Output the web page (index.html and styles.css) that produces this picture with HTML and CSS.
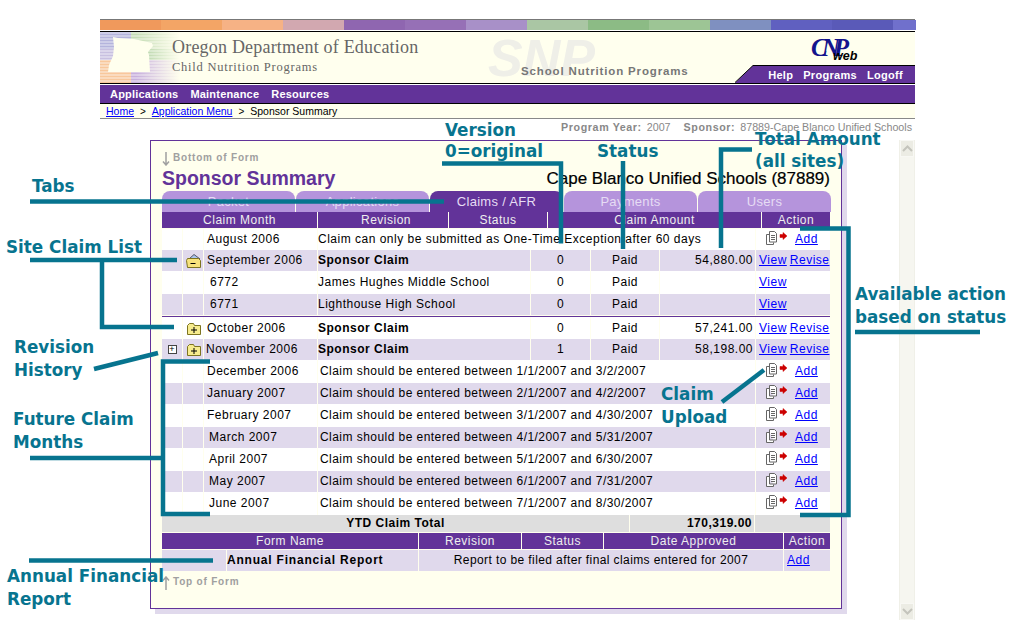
FILE: index.html
```html
<!DOCTYPE html>
<html lang="en">

<head>
    <meta charset="UTF-8">
    <title>Sponsor Summary</title>
    <link rel="stylesheet" href="styles.css">
</head>

<body>
    <svg class="defs" width="0" height="0">
        <symbol id="upload" viewBox="0 0 22 14">
            <path d="M3.500 3.500h-3v10h7v-2M3.500.5h5l2 2v8.500h-7z" fill="#fff" stroke="#666"/>
            <path d="M5 4.500h4M5 6.500h4M5 8.500h4" stroke="#666"/>
            <path d="M14 3.500h3v-2l4 3.500-4 3.500v-2h-3z" fill="#c00" stroke="#c00" stroke-width=".5"/>
        </symbol>
        <symbol id="folder-plus" viewBox="0 0 15 13">
            <path d="M1.500 3.500v9h13v-9h-6l-1-2h-4z" fill="#f7ec8e" stroke="#7d7420"/>
            <path d="M8 5v6M5 8h6" stroke="#000"/>
        </symbol>
        <symbol id="folder-minus" viewBox="0 0 16 14">
            <path d="M4 5l5-4.500L15 5z" fill="#a9c4ec" stroke="#556"/>
            <path d="M1.500 6.500l1-2h11l2 2v7h-13z" fill="#f7e27c" stroke="#7d7420"/>
            <path d="M5.500 9.500h5" stroke="#000"/>
        </symbol>
        <symbol id="arrow-down" viewBox="0 0 8 14">
            <path d="M4 0v13M1 9.500L4 13l3-3.500" fill="none" stroke="#a0a0a0" stroke-width="1.500"/>
        </symbol>
        <symbol id="arrow-up" viewBox="0 0 8 14">
            <path d="M4 14V1M1 4.500L4 1l3 3.500" fill="none" stroke="#a0a0a0" stroke-width="1.500"/>
        </symbol>
    </svg>

    <header class="banner">
        <div class="color-strip">
            <i class="c1"></i><i class="c2"></i><i class="c3"></i><i class="c4"></i><i class="c5"></i><i class="c6"></i><i class="c7"></i><i class="c8"></i><i class="c9"></i><i class="c10"></i><i class="c11"></i><i class="c12"></i><i class="c13"></i><i class="c14"></i>
        </div>
        <div class="brand">
            <svg class="state" width="80" height="51" viewBox="0 0 80 51">
                <defs>
                    <pattern id="stripes" width="4" height="3" patternUnits="userSpaceOnUse">
                        <rect width="4" height="2" fill="#fff" fill-opacity=".35"/>
                    </pattern>
                    <linearGradient id="fade">
                        <stop offset=".45" stop-color="#ffffee" stop-opacity="0"/>
                        <stop offset="1" stop-color="#ffffee"/>
                    </linearGradient>
                </defs>
                <rect x="0" y="0" width="31" height="17" fill="#b4b4dc"/>
                <rect x="31" y="0" width="49" height="17" fill="#c4dcb4"/>
                <rect x="0" y="17" width="31" height="11" fill="#c8c0e0"/>
                <rect x="31" y="17" width="49" height="11" fill="#a8cc9c"/>
                <rect x="0" y="28" width="31" height="23" fill="#f8c89c"/>
                <rect x="31" y="28" width="49" height="23" fill="#c8b0dc"/>
                <rect width="80" height="51" fill="url(#stripes)"/>
                <rect width="80" height="51" fill="url(#fade)"/>
                <path d="M13 5l5 1 16 1 18 4 1 3-5 6 1 3 1 17-42 0 1-7 4-9 1-9z" fill="#ffffee"/>
            </svg>
            <div class="agency">
                <div class="agency-name">Oregon Department of Education</div>
                <div class="agency-sub">Child Nutrition Programs</div>
            </div>
            <div class="snp-mark">SNP</div>
            <div class="snp-name">School Nutrition Programs</div>
            <div class="cnp-logo"><span class="cnp-letters">CNP</span><span class="cnp-web">web</span></div>
            <svg class="raised" width="180" height="19" viewBox="0 0 180 19">
                <path d="M0 19L18 1.500H180V19z" fill="#623399"/>
                <path d="M0 18.500L18 1.500H180" fill="none" stroke="#000"/>
            </svg>
            <nav class="top-links"><a>Help</a><a>Programs</a><a>Logoff</a></nav>
        </div>
        <nav class="menu"><a>Applications</a><a>Maintenance</a><a>Resources</a></nav>
        <div class="crumbs">
            <a href="#">Home</a><span class="sep">&gt;</span><a href="#">Application Menu</a><span class="sep">&gt;</span><span>Sponsor Summary</span>
        </div>
        <div class="context">
            <b>Program Year:</b><span>2007</span><b class="ctx-gap">Sponsor:</b><span>87889-Cape Blanco Unified Schools</span>
        </div>
    </header>

    <main class="frame">
        <section class="card">
            <div class="jump"><svg class="jump-arrow"><use href="#arrow-down"/></svg>Bottom of Form</div>
            <div class="title-row">
                <h1>Sponsor Summary</h1>
                <div class="sponsor-name">Cape Blanco Unified Schools (87889)</div>
            </div>
            <div class="tabs">
                <div class="tab">Packet</div>
                <div class="tab">Applications</div>
                <div class="tab active">Claims / AFR</div>
                <div class="tab">Payments</div>
                <div class="tab">Users</div>
            </div>

            <div class="head head-claims">
                <div>Claim Month</div><div>Revision</div><div>Status</div><div>Claim Amount</div><div>Action</div>
            </div>

            <div class="row">
                <div></div><div></div><div class="month">August 2006</div>
                <div class="note wide">Claim can only be submitted as One-Time Exception after 60 days</div>
                <div class="act"><svg class="up-ico"><use href="#upload"/></svg><a href="#">Add</a></div>
            </div>
            <div class="row alt">
                <div></div><div class="ico"><svg width="16" height="14"><use href="#folder-minus"/></svg></div><div class="month">September 2006</div>
                <div class="note"><b>Sponsor Claim</b></div><div class="mid">0</div><div class="mid">Paid</div><div class="amt">54,880.00</div>
                <div class="act links"><a href="#">View</a><a href="#">Revise</a></div>
            </div>
            <div class="row tall">
                <div></div><div></div><div class="month site">6772</div>
                <div class="note">James Hughes Middle School</div><div class="mid">0</div><div class="mid">Paid</div><div class="amt"></div>
                <div class="act links"><a href="#">View</a></div>
            </div>
            <div class="row alt">
                <div></div><div></div><div class="month site">6771</div>
                <div class="note">Lighthouse High School</div><div class="mid">0</div><div class="mid">Paid</div><div class="amt"></div>
                <div class="act links"><a href="#">View</a></div>
            </div>
            <div class="rule"></div>
            <div class="row mid-height">
                <div></div><div class="ico"><svg width="15" height="13"><use href="#folder-plus"/></svg></div><div class="month">October 2006</div>
                <div class="note"><b>Sponsor Claim</b></div><div class="mid">0</div><div class="mid">Paid</div><div class="amt">57,241.00</div>
                <div class="act links"><a href="#">View</a><a href="#">Revise</a></div>
            </div>
            <div class="row alt">
                <div class="ico"><span class="tree-box">+</span></div><div class="ico"><svg width="15" height="13"><use href="#folder-plus"/></svg></div><div class="month nudge-left">November 2006</div>
                <div class="note"><b>Sponsor Claim</b></div><div class="mid">1</div><div class="mid">Paid</div><div class="amt">58,198.00</div>
                <div class="act links"><a href="#">View</a><a href="#">Revise</a></div>
            </div>

            <div class="row tall">
                <div></div><div></div><div class="month">December 2006</div>
                <div class="note wide future">Claim should be entered between 1/1/2007 and 3/2/2007</div>
                <div class="act"><svg class="up-ico"><use href="#upload"/></svg><a href="#">Add</a></div>
            </div>
            <div class="row alt">
                <div></div><div></div><div class="month">January 2007</div>
                <div class="note wide future">Claim should be entered between 2/1/2007 and 4/2/2007</div>
                <div class="act"><svg class="up-ico"><use href="#upload"/></svg><a href="#">Add</a></div>
            </div>
            <div class="row tall">
                <div></div><div></div><div class="month">February 2007</div>
                <div class="note wide future">Claim should be entered between 3/1/2007 and 4/30/2007</div>
                <div class="act"><svg class="up-ico"><use href="#upload"/></svg><a href="#">Add</a></div>
            </div>
            <div class="row alt">
                <div></div><div></div><div class="month nudge">March 2007</div>
                <div class="note wide future">Claim should be entered between 4/1/2007 and 5/31/2007</div>
                <div class="act"><svg class="up-ico"><use href="#upload"/></svg><a href="#">Add</a></div>
            </div>
            <div class="row tall">
                <div></div><div></div><div class="month nudge">April 2007</div>
                <div class="note wide future">Claim should be entered between 5/1/2007 and 6/30/2007</div>
                <div class="act"><svg class="up-ico"><use href="#upload"/></svg><a href="#">Add</a></div>
            </div>
            <div class="row alt">
                <div></div><div></div><div class="month nudge">May 2007</div>
                <div class="note wide future">Claim should be entered between 6/1/2007 and 7/31/2007</div>
                <div class="act"><svg class="up-ico"><use href="#upload"/></svg><a href="#">Add</a></div>
            </div>
            <div class="row tall">
                <div></div><div></div><div class="month nudge">June 2007</div>
                <div class="note wide future">Claim should be entered between 7/1/2007 and 8/30/2007</div>
                <div class="act"><svg class="up-ico"><use href="#upload"/></svg><a href="#">Add</a></div>
            </div>

            <div class="ytd">
                <div class="ytd-label">YTD Claim Total</div><div class="ytd-amt">170,319.00</div><div></div>
            </div>

            <div class="head head-forms">
                <div>Form Name</div><div>Revision</div><div>Status</div><div>Date Approved</div><div>Action</div>
            </div>
            <div class="afr">
                <div></div><div class="afr-name">Annual Financial Report</div>
                <div class="afr-note">Report to be filed after final claims entered for 2007</div>
                <div class="afr-act"><a href="#">Add</a></div>
            </div>
            <div class="jump jump-top"><svg class="jump-arrow"><use href="#arrow-up"/></svg>Top of Form</div>
        </section>
        <div class="scrollbar">
            <div class="sb-btn"><svg width="11" height="7" viewBox="0 0 11 7"><path d="M1 6l4.500-4.500L10 6" fill="none" stroke="#c4c4bc" stroke-width="2"/></svg></div>
            <div class="sb-btn"><svg width="11" height="7" viewBox="0 0 11 7"><path d="M1 1l4.500 4.500L10 1" fill="none" stroke="#c4c4bc" stroke-width="2"/></svg></div>
        </div>
    </main>

    <!-- callouts drawn over the screenshot -->
    <div class="callouts">
        <div class="label l-version">Version<br>0=original</div>
        <div class="label l-status">Status</div>
        <div class="label l-total">Total Amount<br>(all sites)</div>
        <div class="label l-tabs">Tabs</div>
        <div class="label l-site">Site Claim List</div>
        <div class="label l-rev">Revision<br>History</div>
        <div class="label l-future">Future Claim<br>Months</div>
        <div class="label l-afr">Annual Financial<br>Report</div>
        <div class="label l-upload">Claim<br>Upload</div>
        <div class="label l-action">Available action<br>based on status</div>
        <svg class="lines" width="1015" height="637" viewBox="0 0 1015 637">
            <path d="M442 163.500H561V243.500"/>
            <path d="M623 161V249"/>
            <path d="M752 149.500H721V248"/>
            <path d="M30 201.500H444"/>
            <path d="M30 260H177"/>
            <path d="M102 260V327H174"/>
            <path d="M94 369L158 353"/>
            <path d="M210 361.500H163V514H210"/>
            <path d="M30 458H163"/>
            <path d="M29 560.500H213"/>
            <path d="M722 402L764 370"/>
            <path d="M800 228.500H848.500V515H800"/>
            <path d="M855 332H980"/>
        </svg>
    </div>
</body>

</html>
```
FILE: styles.css
```css
* {
    box-sizing: border-box;
}

body {
    margin: 0;
    position: relative;
    width: 1015px;
    height: 637px;
    overflow: hidden;
    background: #fff;
    color: #000;
    font-family: "Liberation Sans", Arial, sans-serif;
    font-size: 12px;
}

a {
    color: #00f;
}

.defs {
    position: absolute;
}

/* banner */
.banner {
    width: 815px;
    margin: 19px 0 0 100px;
}

.color-strip {
    display: flex;
    height: 12px;
    border-top: 1px solid #777;
    border-bottom: 1px solid #fff;
}

.color-strip i {
    flex: 0 0 61px;
}

.color-strip i:last-child {
    flex-basis: 23px;
}

.c1 { background: #f0995c; }
.c2 { background: #f3a566; }
.c3 { background: #f6b285; }
.c4 { background: #d2a8b0; }
.c5 { background: #8f66b0; }
.c6 { background: #9670b6; }
.c7 { background: #a890c8; }
.c8 { background: #aac6a4; }
.c9 { background: #8cbb85; }
.c10 { background: #9dc595; }
.c11 { background: #7f90c0; }
.c12 { background: #6060c0; }
.c13 { background: #5a5ab8; }
.c14 { background: #7070cc; }

.brand {
    position: relative;
    height: 53px;
    padding-left: 72px;
    background: #ffffee;
    border-top: 1px solid #000;
    border-bottom: 1px solid #000;
    overflow: hidden;
}

.state {
    position: absolute;
    left: 0;
    top: 0;
}

.agency {
    position: relative;
    padding-top: 5px;
    color: #666;
    font-family: "Liberation Serif", "Times New Roman", serif;
}

.agency-name {
    font-size: 18px;
    line-height: 20px;
    letter-spacing: .2px;
}

.agency-sub {
    margin-top: 3px;
    font-size: 12.500px;
    line-height: 15px;
    letter-spacing: .75px;
}

.snp-mark {
    position: absolute;
    left: 388px;
    top: -2px;
    font-size: 52px;
    font-weight: bold;
    font-style: italic;
    line-height: 56px;
    color: #efefe8;
}

.snp-name {
    position: absolute;
    left: 421px;
    top: 33px;
    font-size: 11.500px;
    font-weight: bold;
    color: #777;
    letter-spacing: .85px;
}

.cnp-logo {
    position: absolute;
    left: 711px;
    top: 3px;
    color: #14148c;
    font-family: "Liberation Serif", serif;
    font-style: italic;
    font-weight: bold;
}

.cnp-letters {
    font-size: 25px;
    line-height: 26px;
    letter-spacing: -6px;
}

.cnp-web {
    position: absolute;
    left: 22px;
    top: 15px;
    font-family: "Liberation Sans", sans-serif;
    font-size: 12.500px;
    line-height: 12px;
    color: #000;
}

.raised {
    position: absolute;
    right: 0;
    bottom: 0;
}

.top-links {
    position: absolute;
    right: 12px;
    bottom: 2px;
    display: flex;
    gap: 10px;
    font-size: 11px;
    font-weight: bold;
    letter-spacing: .3px;
}

.top-links a,
.menu a {
    color: #fff;
}

.menu {
    display: flex;
    gap: 12px;
    height: 18px;
    margin-top: 1px;
    padding-left: 10px;
    background: #623399;
    font-size: 11px;
    font-weight: bold;
    line-height: 18px;
    letter-spacing: .2px;
}

.crumbs {
    display: flex;
    height: 16px;
    padding-left: 6px;
    background: #ffffee;
    border-top: 1px solid #000;
    border-bottom: 1px solid #888;
    font-size: 10.500px;
    line-height: 15px;
}

.sep {
    margin: 0 6px;
    font-size: 10px;
}

.context {
    display: flex;
    justify-content: flex-end;
    gap: 5px;
    padding-right: 3px;
    margin-top: 1px;
    color: #888;
    font-size: 10.700px;
    line-height: 14px;
}

.context b {
    letter-spacing: .6px;
}

.ctx-gap {
    margin-left: 8px;
}

/* main frame */
.frame {
    display: flex;
    justify-content: space-between;
    align-items: flex-start;
    width: 815px;
    margin: 6px 0 0 100px;
    padding-left: 50px;
}

.card {
    width: 692px;
    height: 469px;
    padding: 0 11px;
    background: #ffffee;
    border: 1px solid #623399;
    box-shadow: 5px 5px 0 #e0d9ec;
}

.jump {
    display: flex;
    align-items: center;
    height: 15px;
    margin-top: 9px;
    color: #a0a0a0;
    font-size: 10px;
    font-weight: bold;
    line-height: 15px;
    letter-spacing: .8px;
}

.jump-arrow {
    width: 8px;
    height: 14px;
    margin: 2px 3px 0 0;
}

.title-row {
    display: flex;
    justify-content: space-between;
    align-items: flex-end;
    height: 26px;
}

h1 {
    margin: 0;
    color: #623399;
    font-size: 19.500px;
    line-height: 26px;
}

.sponsor-name {
    font-size: 17px;
    line-height: 25px;
    -webkit-text-stroke: .2px #000;
}

.tabs {
    display: grid;
    grid-template-columns: repeat(5, 133px);
    gap: 1px;
    height: 21px;
}

.tab {
    background: #b594dc;
    border-radius: 8px 8px 0 0;
    color: #e6dcf4;
    font-size: 13px;
    line-height: 21px;
    text-align: center;
    letter-spacing: .3px;
}

.tab.active {
    background: #623399;
}

/* table rows */
.head {
    display: grid;
    column-gap: 1px;
    height: 16px;
    margin-bottom: 1px;
    line-height: 16px;
    text-align: center;
    color: #eee;
    letter-spacing: .5px;
}

.head div {
    background: #623399;
}

.head-claims {
    grid-template-columns: 155px 130px 98px 213px 68px;
}

.head-claims div:nth-child(2) {
    padding-left: 6px;
}

.head-forms {
    grid-template-columns: 256px 102px 81px 179px 46px;
}

.row {
    display: grid;
    grid-template-columns: 20px 20px 113px 212px 59px 68px 95px 74px;
    column-gap: 1px;
    height: 21px;
    line-height: 21px;
    letter-spacing: .5px;
}

.row.tall {
    height: 23px;
    line-height: 23px;
}

.row.mid-height {
    height: 22px;
    line-height: 22px;
}

.row > div {
    background: #fff;
}

.row.alt > div {
    background: #e0d9ec;
}

.month {
    padding-left: 3px;
}

.month.site {
    padding-left: 6px;
}

.month.nudge {
    padding-left: 5px;
}

.month.nudge-left {
    padding-left: 2px;
}

.note {
    white-space: nowrap;
}

.note.wide {
    grid-column: 4 / 8;
}

.note.future {
    padding-left: 2px;
    letter-spacing: .45px;
}

.mid {
    text-align: center;
}

.amt {
    padding-right: 2px;
    text-align: right;
}

.ico {
    display: flex;
    justify-content: center;
    align-items: center;
}

.tree-box {
    width: 9px;
    height: 9px;
    border: 1px solid #444;
    background: #fff;
    font-size: 9px;
    line-height: 7px;
    text-align: center;
    letter-spacing: 0;
}

.act {
    display: flex;
    align-items: center;
    padding-left: 10px;
}

.act a {
    margin-left: 7px;
}

.act.links {
    padding-left: 3px;
    gap: 3px;
}

.act.links a {
    margin-left: 0;
    letter-spacing: .5px;
}

.up-ico {
    width: 22px;
    height: 14px;
    margin-top: -3px;
}

.rule {
    height: 2px;
    border-top: 1px solid #623399;
    margin-top: 1px;
    margin-bottom: -1px;
}

.ytd {
    display: grid;
    grid-template-columns: 467px 124px 75px;
    column-gap: 1px;
    height: 17px;
    margin-bottom: 1px;
    font-weight: bold;
    line-height: 16px;
    letter-spacing: .5px;
}

.ytd div {
    background: #dedede;
}

.ytd-label {
    text-align: center;
}

.ytd-amt {
    padding-right: 2px;
    text-align: right;
}

.afr {
    display: grid;
    grid-template-columns: 64px 191px 364px 46px;
    column-gap: 1px;
    height: 21px;
    line-height: 21px;
    letter-spacing: .5px;
}

.afr div {
    background: #e0d9ec;
}

.afr-name {
    font-weight: bold;
    letter-spacing: .8px;
}

.afr-note {
    text-align: center;
    letter-spacing: .4px;
}

.afr-act {
    padding-left: 3px;
}

.jump-top {
    margin-top: 3px;
}

/* fake scrollbar */
.scrollbar {
    display: flex;
    flex-direction: column;
    justify-content: space-between;
    width: 16px;
    height: 480px;
    background: #f6f6f0;
    border-left: 1px solid #f0f0e8;
    border-right: 1px solid #f0f0e8;
}

.sb-btn {
    display: flex;
    justify-content: center;
    align-items: center;
    height: 17px;
    background: #ecece4;
    border: 1px solid #f8f8f4;
}

/* callouts */
.callouts {
    position: absolute;
    inset: 0;
    pointer-events: none;
}

.lines {
    position: absolute;
    left: 0;
    top: 0;
}

.lines path {
    fill: none;
    stroke: #07748f;
    stroke-width: 4.500px;
}

.label {
    position: absolute;
    color: #07748f;
    font-family: "DejaVu Sans", Verdana, sans-serif;
    font-size: 16.800px;
    font-weight: bold;
    line-height: 23px;
    white-space: nowrap;
}

.l-version { left: 445px; top: 120px; line-height: 21px; }
.l-status { left: 597px; top: 140px; }
.l-total { left: 755px; top: 128px; line-height: 22px; }
.l-tabs { left: 32px; top: 175px; }
.l-site { left: 6px; top: 236px; }
.l-rev { left: 14px; top: 336px; }
.l-future { left: 13px; top: 408px; }
.l-afr { left: 7px; top: 565px; }
.l-upload { left: 661px; top: 383px; }
.l-action { left: 855px; top: 283px; }
```
